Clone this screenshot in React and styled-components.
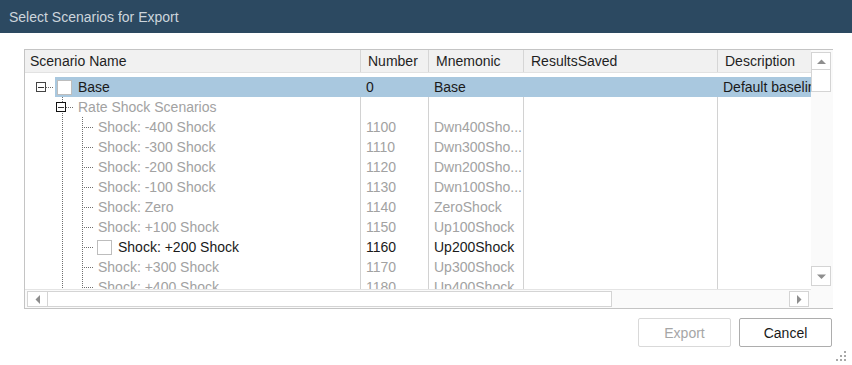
import React from 'react';
import styled, { createGlobalStyle } from 'styled-components';

const GlobalStyle = createGlobalStyle`
  html, body {
    margin: 0;
    padding: 0;
    background: #ffffff;
  }
  body {
    font-family: "Liberation Sans", Arial, sans-serif;
  }
`;

const COLUMNS = '335px 68px 95px 194px 220px';

const rows = [
  { level: 0, name: 'Base', number: '0', mnemonic: 'Base', description: 'Default baseline scenario', expander: true, checkbox: true, active: true, selected: true },
  { level: 1, name: 'Rate Shock Scenarios', expander: true, strongBox: true },
  { level: 2, name: 'Shock: -400 Shock', number: '1100', mnemonic: 'Dwn400Sho...' },
  { level: 2, name: 'Shock: -300 Shock', number: '1110', mnemonic: 'Dwn300Sho...' },
  { level: 2, name: 'Shock: -200 Shock', number: '1120', mnemonic: 'Dwn200Sho...' },
  { level: 2, name: 'Shock: -100 Shock', number: '1130', mnemonic: 'Dwn100Sho...' },
  { level: 2, name: 'Shock: Zero', number: '1140', mnemonic: 'ZeroShock' },
  { level: 2, name: 'Shock: +100 Shock', number: '1150', mnemonic: 'Up100Shock' },
  { level: 2, name: 'Shock: +200 Shock', number: '1160', mnemonic: 'Up200Shock', checkbox: true, active: true },
  { level: 2, name: 'Shock: +300 Shock', number: '1170', mnemonic: 'Up300Shock' },
  { level: 2, name: 'Shock: +400 Shock', number: '1180', mnemonic: 'Up400Shock' },
];

// small scroll arrows, drawn as filled triangles
const Arrow = ({ dir, color = '#9a9a9a' }) => {
  const pts = {
    up: '0,5 4.5,0.5 9,5',
    down: '0,0.5 9,0.5 4.5,5',
    left: '5,0 5,9 0.5,4.5',
    right: '0,0 0,9 4.5,4.5',
  }[dir];
  const vertical = dir === 'up' || dir === 'down';
  return (
    <svg width={vertical ? 9 : 5} height={vertical ? 5 : 9} viewBox={vertical ? '0 0 9 5' : '0 0 5 9'}>
      <polygon points={pts} fill={color} />
    </svg>
  );
};

const Grip = () => (
  <svg width="10" height="10" viewBox="0 0 10 10">
    {[[8, 0], [8, 4], [4, 4], [8, 8], [4, 8], [0, 8]].map(([x, y]) => (
      <rect key={`${x}-${y}`} x={x} y={y} width="2" height="2" fill="#a8a8a8" />
    ))}
  </svg>
);

const TreeRow = ({ row }) => {
  const slots = [];
  for (let i = 0; i <= row.level; i++) {
    const own = i === row.level;
    slots.push(
      <Slot key={i} vline={i >= 1}>
        {own && row.expander && (
          <>
            <Expander strong={row.strongBox}><Minus /></Expander>
            <Tick width={7} />
          </>
        )}
        {own && !row.expander && <Tick width={11} offset={7} />}
      </Slot>
    );
  }
  return (
    <Row selected={row.selected}>
      <NameCell>
        <Lead>{slots}</Lead>
        {row.checkbox && <CheckBox />}
        <Label active={row.active} gap={row.checkbox ? 6 : 3}>{row.name}</Label>
      </NameCell>
      <Cell active={row.active} selected={row.selected}>{row.number}</Cell>
      <Cell active={row.active} selected={row.selected}>{row.mnemonic}</Cell>
      <Cell active={row.active} selected={row.selected}></Cell>
      <Cell active={row.active} selected={row.selected}>{row.description}</Cell>
    </Row>
  );
};

const App = () => (
  <>
    <GlobalStyle />
    <Window>
      <TitleBar>Select Scenarios for Export</TitleBar>
      <Content>
        <GridFrame>
          <Main>
            <HeaderRow>
              <HeaderCell first>Scenario Name</HeaderCell>
              <HeaderCell>Number</HeaderCell>
              <HeaderCell>Mnemonic</HeaderCell>
              <HeaderCell>ResultsSaved</HeaderCell>
              <HeaderCell>Description</HeaderCell>
            </HeaderRow>
            <Body>
              {rows.map((row) => (
                <TreeRow key={row.name} row={row} />
              ))}
            </Body>
          </Main>
          <VScroll>
            <ScrollButton h={18}><Arrow dir="up" color="#8e8e8e" /></ScrollButton>
            <VThumb />
            <Spacer />
            <ScrollButton h={20}><Arrow dir="down" color="#8e8e8e" /></ScrollButton>
          </VScroll>
          <HScroll>
            <ScrollButton w={21}><Arrow dir="left" color="#8e8e8e" /></ScrollButton>
            <HThumb />
            <Spacer />
            <ScrollButton w={20}><Arrow dir="right" color="#8e8e8e" /></ScrollButton>
          </HScroll>
          <Corner />
        </GridFrame>
        <ButtonRow>
          <DialogButton disabled>Export</DialogButton>
          <DialogButton>Cancel</DialogButton>
        </ButtonRow>
        <GripRow><Grip /></GripRow>
      </Content>
    </Window>
  </>
);

export default App;

const Window = styled.div`
  width: 852px;
  height: 365px;
  display: flex;
  flex-direction: column;
  background: #ffffff;
  overflow: hidden;
`;

const TitleBar = styled.div`
  height: 33px;
  flex: none;
  display: flex;
  align-items: center;
  padding-left: 9px;
  background: #2c4961;
  color: #cdd5dc;
  font-size: 14px;
`;

const Content = styled.div`
  display: flex;
  flex-direction: column;
  padding: 16px 19px 0 24px;
`;

const GridFrame = styled.div`
  display: grid;
  grid-template-columns: 786px 22px;
  grid-template-rows: 239px 19px;
  border: 1px solid #c4c4c4;
  background: #fafafa;
`;

const Main = styled.div`
  display: flex;
  flex-direction: column;
  overflow: hidden;
  background: #ffffff;
`;

const HeaderRow = styled.div`
  display: grid;
  grid-template-columns: ${COLUMNS};
  height: 22px;
  flex: none;
  background: #f1f1f1;
  border-bottom: 1px solid #e2e2e2;
`;

const HeaderCell = styled.div`
  display: flex;
  align-items: center;
  padding-left: ${(p) => (p.first ? 5 : 7)}px;
  border-left: ${(p) => (p.first ? 'none' : '1px solid #d6d6d6')};
  color: #1f1f1f;
  font-size: 14px;
  white-space: nowrap;
  overflow: hidden;
`;

const Body = styled.div`
  flex: 1;
  padding-top: 4px;
  overflow: hidden;
`;

const Row = styled.div`
  display: grid;
  grid-template-columns: ${COLUMNS};
  height: 20px;
  background: ${(p) => (p.selected ? 'linear-gradient(to right, transparent 30px, #a9c8df 30px)' : 'transparent')};
`;

const NameCell = styled.div`
  display: flex;
  align-items: center;
  overflow: hidden;
`;

const Lead = styled.div`
  display: flex;
  height: 20px;
  padding-left: 10px;
  flex: none;
`;

const Slot = styled.div`
  width: 20px;
  height: 20px;
  display: flex;
  align-items: center;
  background: ${(p) =>
    p.vline ? 'linear-gradient(to bottom, #6f6f6f 50%, transparent 50%) 7px 0 / 1px 2px repeat-y' : 'none'};
`;

const Expander = styled.div`
  width: 10px;
  height: 10px;
  margin-left: 1px;
  box-sizing: border-box;
  border: 1px solid ${(p) => (p.strong ? '#111111' : '#444444')};
  background: #ffffff;
  display: flex;
  align-items: center;
  justify-content: center;
  flex: none;
`;

const Minus = styled.div`
  width: 6px;
  height: 1px;
  background: #333333;
`;

const Tick = styled.div`
  width: ${(p) => p.width}px;
  height: 1px;
  margin-left: ${(p) => p.offset || 0}px;
  background: linear-gradient(to right, #6f6f6f 50%, transparent 50%) 0 0 / 2px 1px repeat-x;
  flex: none;
`;

const CheckBox = styled.div`
  width: 15px;
  height: 15px;
  margin-left: 2px;
  box-sizing: border-box;
  border: 1px solid #bdbdbd;
  background: #ffffff;
  flex: none;
`;

const Label = styled.span`
  margin-left: ${(p) => p.gap}px;
  font-size: 14px;
  color: ${(p) => (p.active ? '#1a1a1a' : '#a2a2a2')};
  white-space: nowrap;
`;

const Cell = styled.div`
  display: flex;
  align-items: center;
  padding-left: 5px;
  border-left: 1px solid ${(p) => (p.selected ? 'transparent' : '#d2d2d2')};
  font-size: 14px;
  color: ${(p) => (p.active ? '#1a1a1a' : '#a2a2a2')};
  white-space: nowrap;
  overflow: hidden;
`;

const VScroll = styled.div`
  display: flex;
  flex-direction: column;
  padding: 2px 2px 3px 0;
  background: #fafafa;
`;

const HScroll = styled.div`
  display: flex;
  padding: 1px 2px 1px 2px;
  border-top: 1px solid #e4e4e4;
  background: #fafafa;
`;

const Corner = styled.div`
  background: #fafafa;
`;

const ScrollButton = styled.div`
  ${(p) => (p.h ? `height: ${p.h}px;` : '')}
  ${(p) => (p.w ? `width: ${p.w}px;` : '')}
  flex: none;
  box-sizing: border-box;
  border: 1px solid #d4d4d4;
  background: #ffffff;
  display: flex;
  align-items: center;
  justify-content: center;
`;

const VThumb = styled.div`
  height: 22px;
  flex: none;
  box-sizing: border-box;
  border: 1px solid #d4d4d4;
  border-top: none;
  background: #ffffff;
`;

const HThumb = styled.div`
  width: 564px;
  flex: none;
  box-sizing: border-box;
  border: 1px solid #d4d4d4;
  border-left: none;
  background: #ffffff;
`;

const Spacer = styled.div`
  flex: 1;
`;

const ButtonRow = styled.div`
  display: flex;
  justify-content: flex-end;
  gap: 8px;
  margin-top: 9px;
  padding-right: 1px;
`;

const DialogButton = styled.button`
  width: 93px;
  height: 29px;
  box-sizing: border-box;
  border: 1px solid ${(p) => (p.disabled ? '#d9d9d9' : '#adadad')};
  border-radius: 2px;
  background: #ffffff;
  color: ${(p) => (p.disabled ? '#a6a6a6' : '#1a1a1a')};
  font-family: "Liberation Sans", Arial, sans-serif;
  font-size: 14px;
  padding: 0;
`;

const GripRow = styled.div`
  display: flex;
  justify-content: flex-end;
  margin-top: 4px;
  margin-right: -13px;
`;
